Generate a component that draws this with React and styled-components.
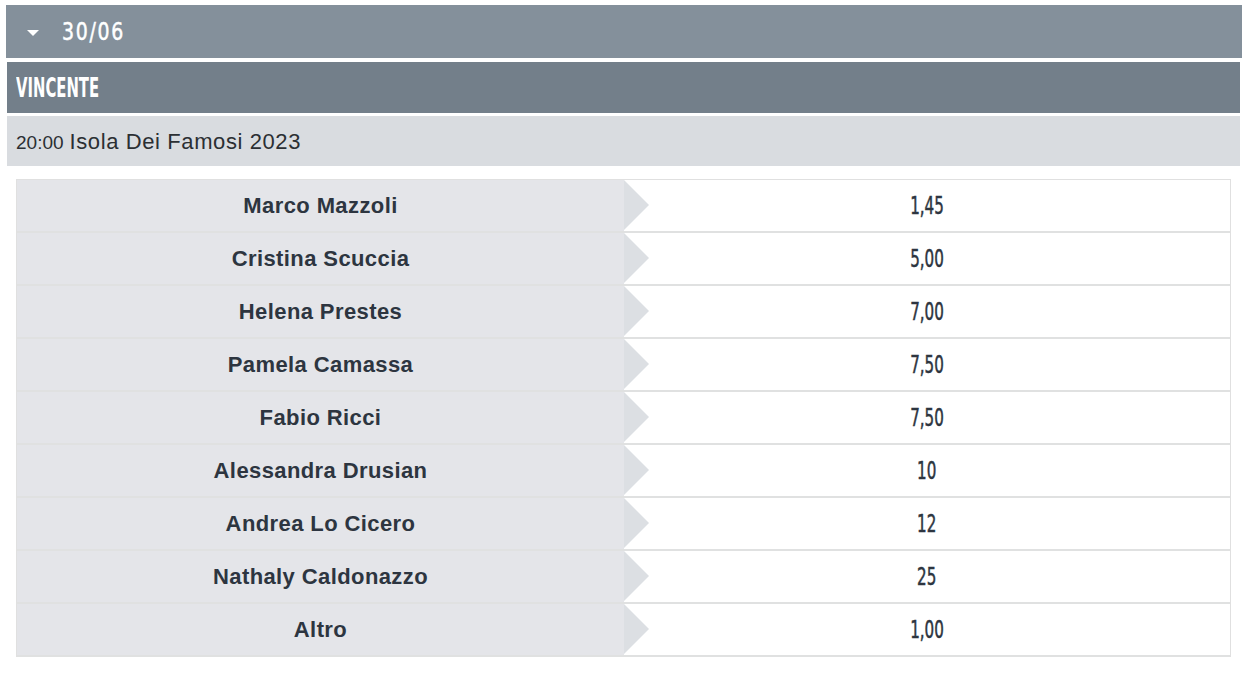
import React from "react"
import styled, { createGlobalStyle } from "styled-components"

const GlobalStyle = createGlobalStyle`
	html, body {
		margin: 0;
		padding: 0;
		background: #ffffff;
	}
	body {
		font-family: "Liberation Sans", Arial, sans-serif;
	}
`

const condensed = `"DejaVu Sans Condensed", "Liberation Sans", sans-serif`

const StyledPage = styled.div`
	padding: 5px 8px 14px 6px;
	width: 1236px;
`

// the reference uses a tall narrow face; squeeze a condensed one to fit
const StyledNarrow = styled.span`
	display: inline-block;
	white-space: nowrap;
	font-family: ${condensed};
	font-weight: ${(p) => p.$weight || "normal"};
	-webkit-text-stroke: ${(p) => p.$stroke || 0}px currentColor;
	transform: scaleX(${(p) => p.$sx});
	transform-origin: ${(p) => p.$origin || "left"} center;
`

const StyledDateBar = styled.div`
	display: flex;
	align-items: center;
	height: 53px;
	background-color: #84909b;
	color: #ffffff;
	padding-left: 21px;
	gap: 23px;
	font-size: 25px;
	letter-spacing: 2px;
`

const StyledCaret = styled.span`
	width: 0;
	height: 0;
	border-left: 6px solid transparent;
	border-right: 6px solid transparent;
	border-top: 6px solid #ffffff;
	margin-top: 2px;
`

const StyledMarketBar = styled.div`
	display: flex;
	align-items: center;
	margin: 4px 2px 0 1px;
	height: 51px;
	background-color: #737f8a;
	color: #ffffff;
	padding-left: 9px;
	font-size: 27px;
`

const StyledEventBar = styled.div`
	display: flex;
	align-items: baseline;
	margin: 3px 2px 0 1px;
	height: 50px;
	line-height: 52px;
	background-color: #d9dce0;
	color: #2b2f33;
	padding-left: 9px;
	font-size: 22px;
	letter-spacing: 0.6px;
`

const StyledTime = styled.span`
	font-size: 19px;
	letter-spacing: 0;
	margin-right: 6px;
`

const StyledTable = styled.div`
	margin: 13px 11px 0 10px;
	border: 1px solid #e0e0e0;
	border-bottom: none;
`

const StyledRow = styled.div`
	display: grid;
	grid-template-columns: 607px 1fr;
	height: 51px;
	border-bottom: 2px solid #e0e1e1;
`

const StyledName = styled.div`
	display: flex;
	align-items: center;
	justify-content: center;
	background-color: #e4e5e9;
	color: #2d3540;
	font-weight: bold;
	font-size: 22px;
	letter-spacing: 0.4px;
`

const StyledOdd = styled.div`
	position: relative;
	display: flex;
	align-items: center;
	justify-content: center;
	background-color: #ffffff;
	color: #2d3540;
	font-size: 24px;

	&::before {
		content: "";
		position: absolute;
		left: 0;
		top: 0;
		width: 0;
		height: 0;
		border-top: 25.5px solid transparent;
		border-bottom: 25.5px solid transparent;
		border-left: 25px solid #dcdfe3;
	}
`

const runners = [
	{ name: "Marco Mazzoli", odd: "1,45" },
	{ name: "Cristina Scuccia", odd: "5,00" },
	{ name: "Helena Prestes", odd: "7,00" },
	{ name: "Pamela Camassa", odd: "7,50" },
	{ name: "Fabio Ricci", odd: "7,50" },
	{ name: "Alessandra Drusian", odd: "10" },
	{ name: "Andrea Lo Cicero", odd: "12" },
	{ name: "Nathaly Caldonazzo", odd: "25" },
	{ name: "Altro", odd: "1,00" },
]

const App = () => (
	<>
		<GlobalStyle />
		<StyledPage>
			<StyledDateBar>
				<StyledCaret />
				<StyledNarrow $sx={0.84} $stroke={0.5}>30/06</StyledNarrow>
			</StyledDateBar>
			<StyledMarketBar>
				<StyledNarrow $sx={0.61} $weight="bold">VINCENTE</StyledNarrow>
			</StyledMarketBar>
			<StyledEventBar>
				<StyledTime>20:00</StyledTime>
				Isola Dei Famosi 2023
			</StyledEventBar>
			<StyledTable>
				{runners.map((r) => (
					<StyledRow key={r.name}>
						<StyledName>{r.name}</StyledName>
						<StyledOdd>
							<StyledNarrow $sx={0.7} $stroke={0.5} $origin="center">{r.odd}</StyledNarrow>
						</StyledOdd>
					</StyledRow>
				))}
			</StyledTable>
		</StyledPage>
	</>
)

export default App
